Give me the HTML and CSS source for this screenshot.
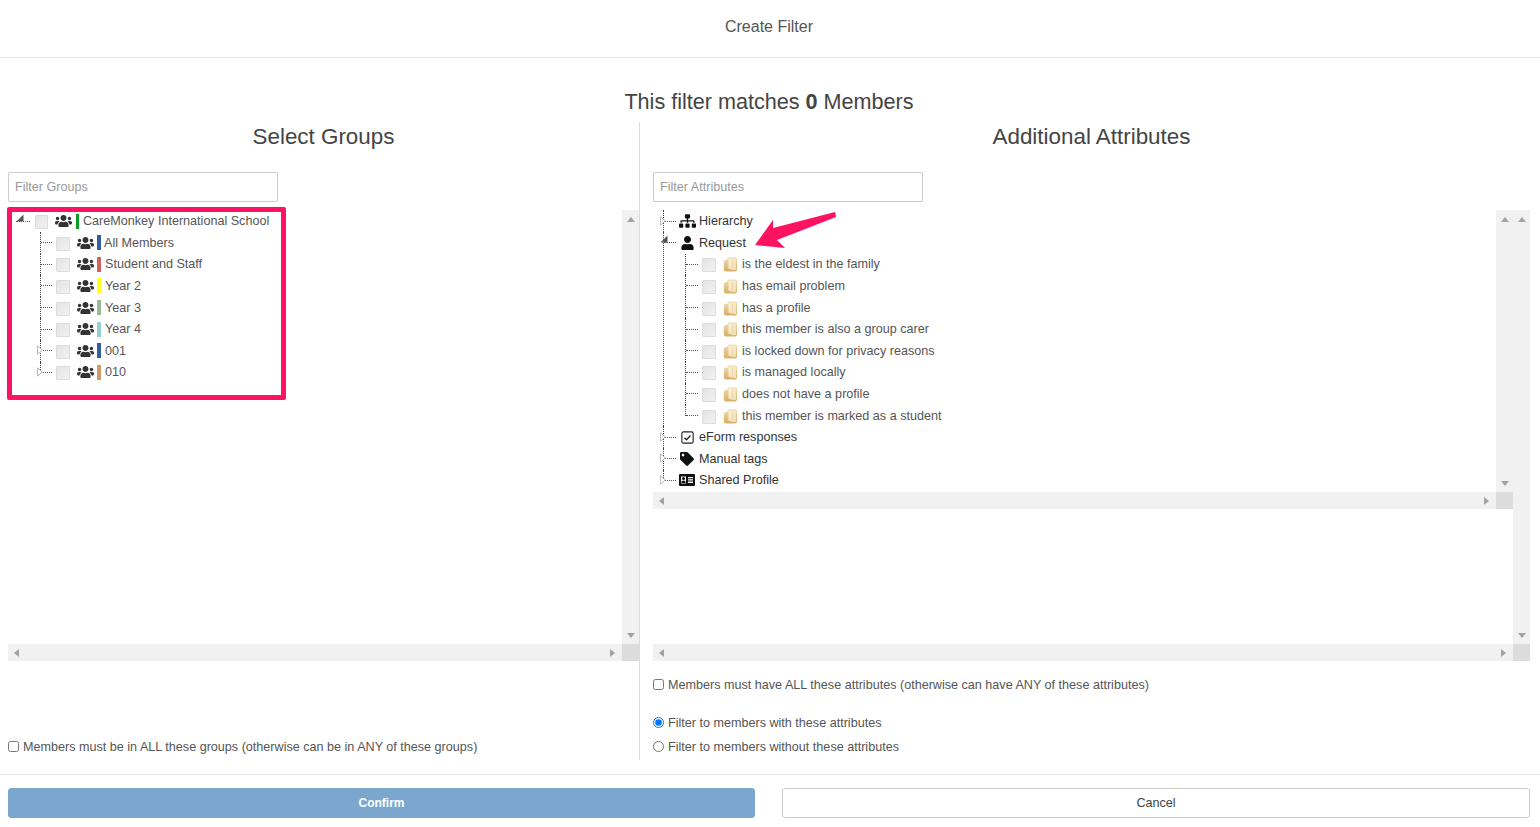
FILE: index.html
```html
<!DOCTYPE html>
<html lang="en">
<head>
<meta charset="utf-8">
<title>Create Filter</title>
<link rel="stylesheet" href="styles.css">
</head>
<body>
<svg class="defs" aria-hidden="true">
  <defs>
    <linearGradient id="fold" x1="0" y1="0" x2="0" y2="1"><stop offset="0" stop-color="#efdcae"/><stop offset="1" stop-color="#d9ae68"/></linearGradient>
    <linearGradient id="leaf" x1="0" y1="0" x2="1" y2="1"><stop offset="0" stop-color="#fbf3dc"/><stop offset="1" stop-color="#f0dcae"/></linearGradient>
    <symbol id="users" viewBox="0 0 640 512"><path d="M96 224c35.3 0 64-28.7 64-64s-28.7-64-64-64-64 28.7-64 64 28.7 64 64 64zm448 0c35.3 0 64-28.7 64-64s-28.7-64-64-64-64 28.7-64 64 28.7 64 64 64zm32 32h-64c-17.6 0-33.5 7.1-45.1 18.6 40.3 22.1 68.9 62 75.1 109.4h66c17.7 0 32-14.3 32-32v-32c0-35.3-28.7-64-64-64zm-256 0c61.9 0 112-50.1 112-112S381.9 32 320 32 208 82.1 208 144s50.1 112 112 112zm76.8 32h-8.3c-20.8 10-43.9 16-68.5 16s-47.6-6-68.5-16h-8.3C179.6 288 128 339.6 128 403.2V432c0 26.5 21.5 48 48 48h288c26.5 0 48-21.5 48-48v-28.8c0-63.6-51.6-115.2-115.2-115.2zm-223.7-13.4C161.5 263.1 145.6 256 128 256H64c-35.3 0-64 28.7-64 64v32c0 17.7 14.3 32 32 32h65.9c6.3-47.4 34.9-87.3 75.2-109.4z"/></symbol>
    <symbol id="sitemap" viewBox="0 0 640 512"><path d="M128 352H32c-17.67 0-32 14.33-32 32v96c0 17.67 14.33 32 32 32h96c17.67 0 32-14.33 32-32v-96c0-17.67-14.33-32-32-32zm-24-80h192v48h48v-48h192v48h48v-57.59c0-21.17-17.23-38.41-38.41-38.41H344v-64h40c17.67 0 32-14.33 32-32V32c0-17.67-14.33-32-32-32H256c-17.67 0-32 14.33-32 32v96c0 17.67 14.33 32 32 32h40v64H94.41C73.23 224 56 241.23 56 262.41V320h48v-48zm264 80h-96c-17.67 0-32 14.33-32 32v96c0 17.67 14.33 32 32 32h96c17.67 0 32-14.33 32-32v-96c0-17.67-14.33-32-32-32zm240 0h-96c-17.67 0-32 14.33-32 32v96c0 17.67 14.33 32 32 32h96c17.67 0 32-14.33 32-32v-96c0-17.67-14.33-32-32-32z"/></symbol>
    <symbol id="user" viewBox="0 0 448 512"><path d="M224 256c70.7 0 128-57.3 128-128S294.7 0 224 0 96 57.3 96 128s57.3 128 128 128zm89.6 32h-16.7c-22.2 10.2-46.9 16-72.9 16s-50.6-5.8-72.9-16h-16.7C60.2 288 0 348.2 0 422.4V464c0 26.5 21.5 48 48 48h352c26.5 0 48-21.5 48-48v-41.6c0-74.2-60.2-134.4-134.4-134.4z"/></symbol>
    <symbol id="check" viewBox="0 0 16 16"><rect x="2" y="2" width="12" height="12" rx="1.5" fill="none" stroke="currentColor" stroke-width="1.2"/><path d="M4.800 8.200l2.200 2.200 4.200-4.600" fill="none" stroke="currentColor" stroke-width="1.400"/></symbol>
    <symbol id="tag" viewBox="0 0 512 512"><path d="M0 252.118V48C0 21.49 21.49 0 48 0h204.118a48 48 0 0 1 33.941 14.059l211.882 211.882c18.745 18.745 18.745 49.137 0 67.882L293.823 497.941c-18.745 18.745-49.137 18.745-67.882 0L14.059 286.059A48 48 0 0 1 0 252.118zM112 64c-26.51 0-48 21.49-48 48s21.49 48 48 48 48-21.49 48-48-21.49-48-48-48z"/></symbol>
    <symbol id="card" viewBox="0 0 16 12"><path fill-rule="evenodd" d="M1 0h14a1 1 0 0 1 1 1v10a1 1 0 0 1-1 1H1a1 1 0 0 1-1-1V1a1 1 0 0 1 1-1zM2 2.500v7h5v-7zM9 3v1.300h5V3zM9 5.300v1.300h5V5.300zM9 7.600v1.300h5V7.600z"/><circle cx="4.500" cy="4.600" r="1.500"/><path d="M2.300 9c0-1.700 1-2.500 2.200-2.500s2.200.8 2.200 2.500z"/></symbol>
    <symbol id="folder" viewBox="0 0 15 15"><path d="M.8 5Q.8 3.500 2.500 3H4.500V1.500Q4.500 .5 6 .5h6.500Q14 .5 14 2V12.500Q14 14.500 12 14.500H3Q.8 14.500 .8 12.500z" fill="url(#fold)"/><path d="M5.500 1.500h7.500v11.500H9.500L5.500 11.500z" fill="url(#leaf)"/><path d="M9.200 2.500V13" fill="none" stroke="#e8cf9c" stroke-width=".7"/></symbol>
    <symbol id="tg-closed" viewBox="0 0 6 10"><path d="M.5 .8L5.300 5 .5 9.200z" fill="#fff" stroke="#bbb"/></symbol>
    <symbol id="tg-open" viewBox="0 0 8 8"><path d="M7.500 .5V7.500H.5z" fill="#555"/></symbol>
  </defs>
</svg>

<div class="page">
  <header class="top"><h1 class="top-title">Create Filter</h1></header>
  <p class="summary">This filter matches <b>0</b> Members</p>

  <main class="cols">
    <section class="col col-left">
      <h2 class="col-title">Select Groups</h2>
      <input class="filter" type="text" placeholder="Filter Groups">
      <div class="pane">
        <div class="pane-body">
          <div class="gtree">
            <div class="row">
              <span class="conn conn-root"><svg class="tg-o"><use href="#tg-open"/></svg></span>
              <span class="cb cb-root"></span>
              <svg class="ic-users"><use href="#users"/></svg>
              <span class="bar bar-root c-green"></span>
              <span class="lbl">CareMonkey International School</span>
            </div>
            <ul class="tlist gkids">
              <li class="row"><span class="conn"></span><span class="cb"></span><svg class="ic-users"><use href="#users"/></svg><span class="bar c-blue"></span><span class="lbl lbl-tight">All Members</span></li>
              <li class="row"><span class="conn"></span><span class="cb"></span><svg class="ic-users"><use href="#users"/></svg><span class="bar c-red"></span><span class="lbl">Student and Staff</span></li>
              <li class="row"><span class="conn"></span><span class="cb"></span><svg class="ic-users"><use href="#users"/></svg><span class="bar c-yellow"></span><span class="lbl">Year 2</span></li>
              <li class="row"><span class="conn"></span><span class="cb"></span><svg class="ic-users"><use href="#users"/></svg><span class="bar c-sage"></span><span class="lbl">Year 3</span></li>
              <li class="row"><span class="conn"></span><span class="cb"></span><svg class="ic-users"><use href="#users"/></svg><span class="bar c-teal"></span><span class="lbl">Year 4</span></li>
              <li class="row"><span class="conn"><svg class="tg-c"><use href="#tg-closed"/></svg></span><span class="cb"></span><svg class="ic-users"><use href="#users"/></svg><span class="bar c-blue"></span><span class="lbl">001</span></li>
              <li class="row"><span class="conn"><svg class="tg-c"><use href="#tg-closed"/></svg></span><span class="cb"></span><svg class="ic-users"><use href="#users"/></svg><span class="bar c-tan"></span><span class="lbl">010</span></li>
            </ul>
          </div>
        </div>
        <div class="vbar"><i class="ar ar-up"></i><i class="ar ar-down"></i></div>
        <div class="hbar"><i class="ar ar-left"></i><i class="ar ar-right"></i></div>
        <div class="corner"></div>
      </div>
      <label class="opt opt-all-groups"><input type="checkbox">Members must be in ALL these groups (otherwise can be in ANY of these groups)</label>
    </section>

    <section class="col col-right">
      <h2 class="col-title">Additional Attributes</h2>
      <input class="filter" type="text" placeholder="Filter Attributes">
      <div class="pane">
        <div class="pane-body">
          <div class="pane pane-inner">
            <div class="pane-body">
              <ul class="tlist atree">
                <li class="row"><span class="conn"><svg class="tg-c"><use href="#tg-closed"/></svg></span><span class="slot"><svg class="ic-sitemap"><use href="#sitemap"/></svg></span><span class="lbl lbl-dark">Hierarchy</span></li>
                <li>
                  <div class="row"><span class="conn"><svg class="tg-o tg-o-a"><use href="#tg-open"/></svg></span><span class="slot"><svg class="ic-user"><use href="#user"/></svg></span><span class="lbl lbl-dark">Request</span></div>
                  <ul class="tlist akids">
                    <li class="row"><span class="conn"></span><span class="cb"></span><svg class="ic-folder"><use href="#folder"/></svg><span class="lbl">is the eldest in the family</span></li>
                    <li class="row"><span class="conn"></span><span class="cb"></span><svg class="ic-folder"><use href="#folder"/></svg><span class="lbl">has email problem</span></li>
                    <li class="row"><span class="conn"></span><span class="cb"></span><svg class="ic-folder"><use href="#folder"/></svg><span class="lbl">has a profile</span></li>
                    <li class="row"><span class="conn"></span><span class="cb"></span><svg class="ic-folder"><use href="#folder"/></svg><span class="lbl">this member is also a group carer</span></li>
                    <li class="row"><span class="conn"></span><span class="cb"></span><svg class="ic-folder"><use href="#folder"/></svg><span class="lbl">is locked down for privacy reasons</span></li>
                    <li class="row"><span class="conn"></span><span class="cb"></span><svg class="ic-folder"><use href="#folder"/></svg><span class="lbl">is managed locally</span></li>
                    <li class="row"><span class="conn"></span><span class="cb"></span><svg class="ic-folder"><use href="#folder"/></svg><span class="lbl">does not have a profile</span></li>
                    <li class="row"><span class="conn"></span><span class="cb"></span><svg class="ic-folder"><use href="#folder"/></svg><span class="lbl">this member is marked as a student</span></li>
                  </ul>
                </li>
                <li class="row"><span class="conn"><svg class="tg-c"><use href="#tg-closed"/></svg></span><span class="slot"><svg class="ic-check"><use href="#check"/></svg></span><span class="lbl lbl-dark">eForm responses</span></li>
                <li class="row"><span class="conn"><svg class="tg-c"><use href="#tg-closed"/></svg></span><span class="slot"><svg class="ic-tag"><use href="#tag"/></svg></span><span class="lbl lbl-dark">Manual tags</span></li>
                <li class="row"><span class="conn"><svg class="tg-c"><use href="#tg-closed"/></svg></span><span class="slot"><svg class="ic-card"><use href="#card"/></svg></span><span class="lbl lbl-dark">Shared Profile</span></li>
              </ul>
            </div>
            <div class="vbar"><i class="ar ar-up"></i><i class="ar ar-down"></i></div>
            <div class="hbar"><i class="ar ar-left"></i><i class="ar ar-right"></i></div>
            <div class="corner"></div>
          </div>
        </div>
        <div class="vbar"><i class="ar ar-up"></i><i class="ar ar-down"></i></div>
        <div class="hbar"><i class="ar ar-left"></i><i class="ar ar-right"></i></div>
        <div class="corner"></div>
      </div>
      <label class="opt opt-all-attrs"><input type="checkbox">Members must have ALL these attributes (otherwise can have ANY of these attributes)</label>
      <label class="opt opt-with"><input type="radio" name="mode" checked>Filter to members with these attributes</label>
      <label class="opt opt-without"><input type="radio" name="mode">Filter to members without these attributes</label>
    </section>
  </main>

  <footer class="foot">
    <button class="btn btn-confirm" type="button">Confirm</button>
    <button class="btn btn-cancel" type="button">Cancel</button>
  </footer>

  <div class="highlight"></div>
  <svg class="pointer" viewBox="0 0 90 45" aria-hidden="true"><path d="M5 38L23 13 23 21 85 5 86 10 27 33 35 41z"/></svg>
</div>
</body>
</html>
```
FILE: styles.css
```css
* { box-sizing: border-box; }
html, body { margin: 0; padding: 0; }
body {
  font-family: "Liberation Sans", Arial, sans-serif;
  font-size: 12.6px;
  color: #555;
  background: #fff;
  overflow: hidden;
}
.defs { position: absolute; width: 0; height: 0; }
.page { position: relative; width: 1540px; height: 827px; }

.top {
  height: 58px;
  border-bottom: 1px solid #e5e5e5;
  display: flex;
  align-items: center;
  justify-content: center;
  padding: 0 2px 4px 0;
}
.top-title { margin: 0; font-size: 16px; font-weight: 400; color: #555; }

.summary {
  margin: 0;
  height: 64px;
  padding: 30px 2px 0 0;
  text-align: center;
  font-size: 21.6px;
  line-height: 27px;
  color: #444;
}

.cols { display: flex; height: 638px; }
.col { display: flex; flex-direction: column; }
.col-left { width: 640px; padding-left: 8px; border-right: 1px solid #ddd; }
.col-right { width: 900px; padding: 0 10px 0 13px; }
.col-title {
  margin: 0;
  height: 50px;
  padding-top: 1px;
  text-align: center;
  font-size: 22.4px;
  line-height: 27px;
  font-weight: 400;
  color: #444;
}
.filter {
  width: 270px;
  height: 30px;
  flex: none;
  padding: 0 6px 1px;
  border: 1px solid #ccc;
  border-radius: 2px;
  font: 12.6px "Liberation Sans", Arial, sans-serif;
  color: #555;
}
.filter::placeholder { color: #999; opacity: 1; }

.pane {
  display: grid;
  grid-template-columns: 1fr 17px;
  grid-template-rows: 1fr 17px;
  height: 451px;
  flex: none;
  margin-top: 8px;
}
.pane-inner { height: 299px; margin-top: 0; }
.pane-body { min-width: 0; min-height: 0; overflow: hidden; }
.vbar, .hbar {
  background: #f1f1f1;
  display: flex;
  justify-content: space-between;
  align-items: center;
}
.vbar { flex-direction: column; padding: 7px 0 6px; }
.hbar { padding: 0 7px 0 6px; }
.corner { background: #dcdcdc; }
.ar { display: block; width: 0; height: 0; border: 4px solid transparent; }
.ar-up { border-top: 0; border-bottom: 5px solid #a3a3a3; }
.ar-down { border-bottom: 0; border-top: 5px solid #a3a3a3; }
.ar-left { border-left: 0; border-right: 5px solid #a3a3a3; }
.ar-right { border-right: 0; border-left: 5px solid #a3a3a3; }

.tlist { list-style: none; margin: 0; padding: 0; }
.tlist > li { position: relative; }
.tlist > li::before {
  content: "";
  position: absolute;
  left: 0;
  top: 0;
  bottom: 0;
  border-left: 1px dotted #444;
}
.tlist > li:last-child::before { bottom: 50%; }

.row { display: flex; align-items: center; height: 21.6px; white-space: nowrap; }
.lbl { color: #555; font-size: 12.6px; line-height: 18px; }
.lbl-dark { color: #333; }
.lbl-tight { margin-left: -1px; }

.conn { position: relative; flex: none; width: 12px; height: 1px; margin-left: 1px; border-bottom: 1px dotted #555; }
.conn-root { width: 14px; margin-left: 0; }
.tg-c { position: absolute; left: -4px; top: -5px; width: 6px; height: 10px; }
.tg-o { position: absolute; left: 0; top: -7px; width: 8px; height: 8px; }
.tg-o-a { left: -4px; }

.cb {
  flex: none;
  width: 14px;
  height: 14px;
  margin: 2px 7px 0 4px;
  border: 1px solid #dcdcdc;
  border-radius: 1px;
  background: linear-gradient(135deg, #e4e4e4, #f1f1f1);
}
.cb-root { width: 13px; margin-left: 5px; }

.gtree { padding: .4px 0 0 8px; }
.gkids { margin-left: 24px; }
.gkids .conn { width: 11px; }
.ic-users { flex: none; width: 17px; height: 14px; color: #333; fill: #333; }
.bar { flex: none; width: 4px; height: 15px; margin: 0 4px 0 3px; }
.bar-root { width: 3px; margin-left: 4px; }
.c-green { background: #0a9a1e; }
.c-blue { background: #2f5f9f; }
.c-red { background: #d46060; }
.c-yellow { background: #ffff22; }
.c-sage { background: #98b898; }
.c-teal { background: #96cfd0; }
.c-tan { background: #cf9b66; }

.atree { margin-left: 10px; padding-top: .4px; }
.slot { flex: none; width: 21px; margin-left: 2px; display: flex; align-items: center; justify-content: center; padding-right: 3px; }
.slot svg { fill: #111; color: #222; }
.ic-sitemap { width: 17px; height: 14px; }
.ic-user { width: 13px; height: 14px; }
.ic-check { width: 15px; height: 15px; }
.ic-tag { width: 14px; height: 14px; }
.ic-card { width: 16px; height: 12px; }
.akids { margin-left: 22px; }
.ic-folder { flex: none; width: 15px; height: 15px; margin: 1px 4px 0 0; }

.opt { display: flex; align-items: center; font-size: 12.6px; line-height: 18px; color: #555; }
.opt input { margin: 0 4px 0 0; flex: none; width: 11px; height: 11px; position: relative; top: -1px; }
.opt-all-groups { margin-top: 77px; }
.opt-all-attrs { margin-top: 15px; }
.opt-with { margin-top: 20px; }
.opt-without { margin-top: 6px; }

.foot {
  margin-top: 14px;
  border-top: 1px solid #e5e5e5;
  padding: 13px 10px 0 8px;
  display: flex;
  gap: 27px;
}
.btn { height: 30px; border-radius: 3px; font: 12.6px "Liberation Sans", Arial, sans-serif; }
.btn-confirm { flex: none; width: 747px; background: #7ba7cf; border: 1px solid #7ba7cf; color: #fff; font-size: 12px; font-weight: 700; }
.btn-cancel { flex: 1; background: #fff; border: 1px solid #ccc; color: #444; }

.highlight {
  position: absolute;
  left: 7px;
  top: 207px;
  width: 279px;
  height: 193px;
  border: 5px solid #ff1361;
  border-radius: 2px;
  pointer-events: none;
}
.pointer { position: absolute; left: 750px; top: 207px; width: 90px; height: 45px; fill: #ff1361; }
```
